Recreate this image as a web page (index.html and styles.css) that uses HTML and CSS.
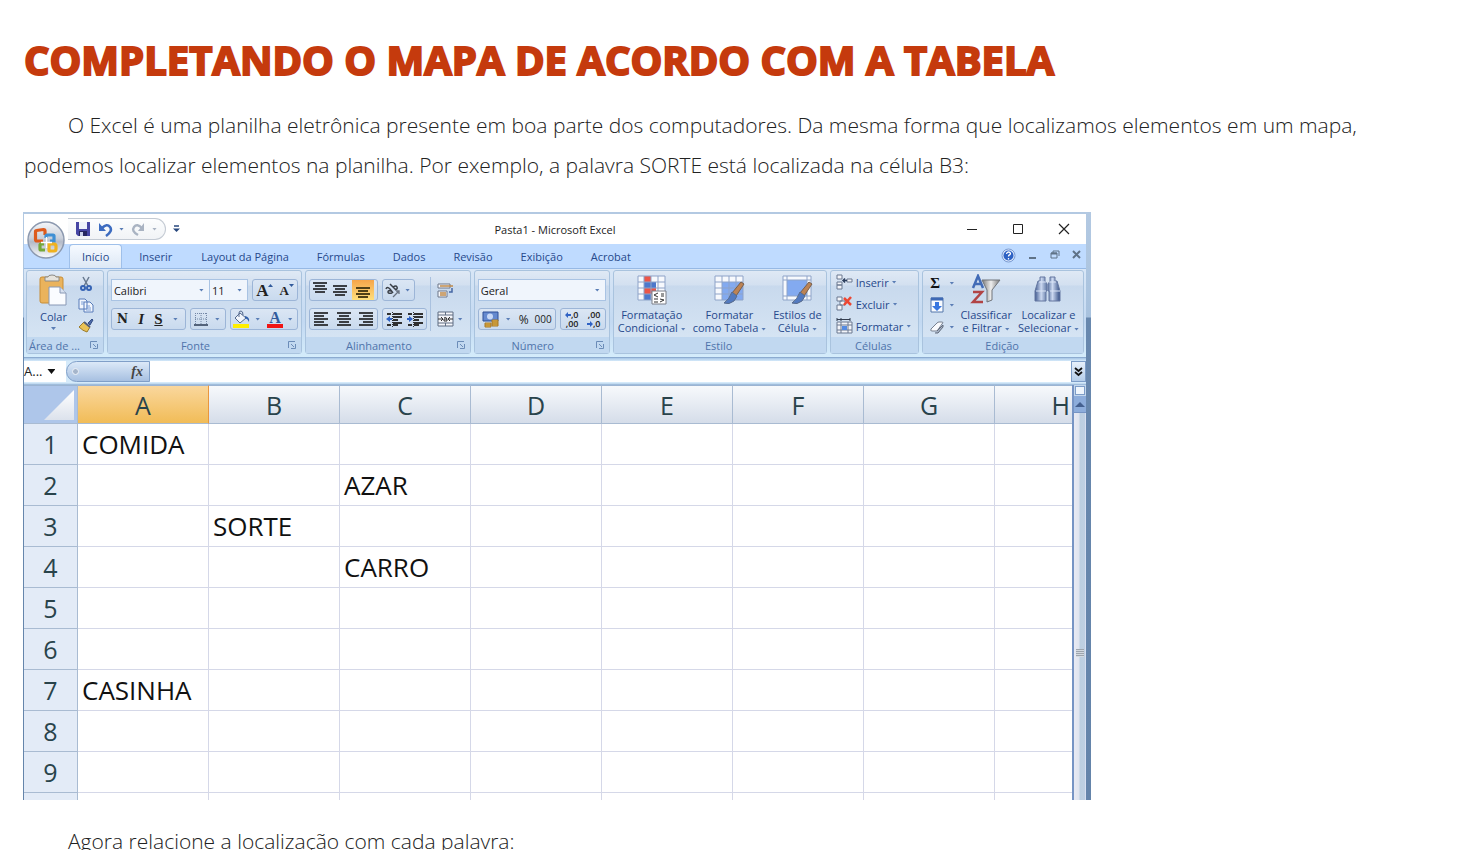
FILE: index.html
```html
<!DOCTYPE html>
<html lang="pt-BR">
<head>
<meta charset="utf-8">
<title>Completando o mapa de acordo com a tabela</title>
<link rel="stylesheet" href="styles.css">
</head>
<body>
<main class="page">
<h1 class="title">COMPLETANDO O MAPA DE ACORDO COM A TABELA</h1>
<p class="text">O Excel é uma planilha eletrônica presente em boa parte dos computadores. Da mesma forma que localizamos elementos em um mapa, podemos localizar elementos na planilha. Por exemplo, a palavra SORTE está localizada na célula B3:</p>

<section class="excel" aria-label="Planilha">
<div class="app">
  <div class="top">
    <button class="orb" aria-label="Botão Office"><svg width="40" height="40" viewBox="0 0 40 40"><defs><linearGradient id="orb" x1="0" y1="0" x2="0" y2="1"><stop offset="0" stop-color="#f4f6f9"/><stop offset=".45" stop-color="#c9cfda"/><stop offset=".55" stop-color="#b3bac8"/><stop offset="1" stop-color="#fbfcfd"/></linearGradient></defs><circle cx="20" cy="20" r="18" fill="url(#orb)" stroke="#8c99af" stroke-width="1.5"/><g fill="none" stroke-width="3.2"><path stroke="#dd5a1c" d="M17 21h-6q-1.500 0-1.500-1.500v-8q0-1 1-1l7-1q1.500 0 1.500 1.500v4"/><path stroke="#3f8fd4" d="M20 18v-2q0-1 1-1h6q1 0 1 1v5h-4"/><path stroke="#75a83a" d="M18 24h-3q-1 0-1 1v4q0 1 1 1h4"/><path stroke="#f0b21e" d="M23 24h5q2 0 2 2v3q0 2-2 2h-4q-1 0-1-1z"/></g><path d="M20.500 17v11M15 22.500h11" stroke="#fff" stroke-width="1.400"/></svg></button>
    <header class="titlebar">
      <div class="quick">
        <button class="bare" aria-label="Salvar"><svg width="16" height="16" viewBox="0 0 16 16"><path fill="#4646a4" d="M1 1h14v14H3l-2-2z"/><path fill="#eef2fb" d="M4 1h8v7H4z"/><path fill="#262660" d="M4 10h8v5H4z"/><path fill="#c9cfe8" d="M5 11h3v4H5z"/></svg></button>
        <button class="bare" aria-label="Desfazer"><svg width="15" height="15" viewBox="0 0 15 15"><path d="M4 6q5-5 8-1t-4 9" fill="none" stroke="#3d6cc0" stroke-width="2.6"/><path fill="#3d6cc0" d="M1 1v8h7z"/></svg><i class="caret"></i></button>
        <button class="bare" aria-label="Refazer"><svg width="15" height="15" viewBox="0 0 15 15"><path d="M11 6q-5-5-8-1t4 8" fill="none" stroke="#a9b3c2" stroke-width="2.4"/><path fill="#a9b3c2" d="M13 1v8H7z"/></svg><i class="caret dim"></i></button>
      </div>
      <button class="bare more" aria-label="Personalizar"><svg width="7" height="8" viewBox="0 0 7 8"><path d="M1 1h5" stroke="#27477d" stroke-width="1.500"/><path d="M0 3.500h7L3.500 7z" fill="#27477d"/></svg></button>
      <span class="doc">Pasta1 - Microsoft Excel</span>
      <div class="winbtns">
        <button class="bare" aria-label="Minimizar"><svg width="12" height="12"><path d="M1 6.500h10" stroke="#222"/></svg></button>
        <button class="bare" aria-label="Maximizar"><svg width="12" height="12"><path d="M1.500 1.500h9v9h-9z" stroke="#222" fill="none"/></svg></button>
        <button class="bare" aria-label="Fechar"><svg width="12" height="12"><path d="M1 1l10 10M11 1L1 11" stroke="#222" stroke-width="1.200"/></svg></button>
      </div>
    </header>
    <nav class="tabs">
      <button class="tab active">Início</button><button class="tab">Inserir</button><button class="tab">Layout da Página</button><button class="tab">Fórmulas</button><button class="tab">Dados</button><button class="tab">Revisão</button><button class="tab">Exibição</button><button class="tab">Acrobat</button>
      <div class="docbtns">
        <button class="bare" aria-label="Ajuda"><svg width="15" height="15" viewBox="0 0 15 15"><circle cx="7.500" cy="7.500" r="6.500" fill="#dce8fb" stroke="#7b9bd1"/><circle cx="7.500" cy="7.500" r="5" fill="#2d62c4"/><path d="M5.500 6q.3-2 2-2t2 1.500q0 1-1.300 1.600-.7.400-.7 1.400M7.500 10v1.500" stroke="#fff" stroke-width="1.300" fill="none"/></svg></button>
        <button class="bare" aria-label="Minimizar pasta"><svg width="10" height="10"><path d="M1 8h7" stroke="#5f7287" stroke-width="2"/></svg></button>
        <button class="bare" aria-label="Restaurar pasta"><svg width="10" height="10"><path d="M3 1h6v5M3 1v2M1 3h6v5H1z" stroke="#5f7287" fill="none"/><path d="M1 3.500h6" stroke="#5f7287" stroke-width="2"/></svg></button>
        <button class="bare" aria-label="Fechar pasta"><svg width="10" height="10"><path d="M1 1l7 7M8 1L1 8" stroke="#5f7287" stroke-width="2"/></svg></button>
      </div>
    </nav>
  </div>

  <div class="ribbon">
    <section class="group g-clip">
      <div class="body clip">
        <button class="big"><svg width="28" height="32" viewBox="0 0 28 32"><rect x="1" y="3" width="23" height="26" rx="2" fill="#eab35c" stroke="#c78d36"/><path d="M6 3h3q0-2 4-2t4 2h3v4H6z" fill="#e6e3dc" stroke="#8b8a86"/><path d="M10 13h11l6 6v12H10z" fill="#fafcff" stroke="#8898b5"/><path d="M21 13v6h6" fill="#d8e1f0" stroke="#8898b5"/></svg><span>Colar</span><i class="caret"></i></button>
        <div class="col">
          <button class="bare" aria-label="Recortar"><svg width="16" height="16" viewBox="0 0 16 16"><path d="M5 1l5 9M11 1L6 10" stroke="#68798f" stroke-width="1.500"/><circle cx="5" cy="12" r="2" fill="none" stroke="#3563b4" stroke-width="2"/><circle cx="11" cy="12" r="2" fill="none" stroke="#3563b4" stroke-width="2"/></svg></button>
          <button class="bare" aria-label="Copiar"><svg width="16" height="16" viewBox="0 0 16 16"><path d="M1 2h6l2 2v8H1zM6 5h6l3 3v7H6z" fill="#f2f6fd" stroke="#577bb9"/><path d="M3 5h3M3 7h3M8 9h4M8 11h5M8 13h5" stroke="#7c9fd6"/></svg></button>
          <button class="bare" aria-label="Pincel"><svg width="16" height="16" viewBox="0 0 16 16"><path d="M10 5l4-4 1 1-3 5z" fill="#4c6aa8" stroke="#344f87"/><path d="M6 4l6 5-3 5q-4-1-8-5z" fill="#e9c255" stroke="#9c7b2a"/><path d="M6 4l6 5" stroke="#54607a" stroke-width="2"/></svg></button>
        </div>
      </div>
      <footer class="label"><span>Área de ...</span><svg class="launch" width="8" height="8"><path d="M.5 7V.5H7M3 3l3 3M7.500 3v4.500H3" stroke="#6b8cb8" fill="none"/></svg></footer>
    </section>

    <section class="group g-font">
      <div class="body rows">
        <div class="row">
          <div class="combo"><label class="field wide"><select aria-label="Fonte"><option>Calibri</option></select><i class="caret"></i></label><label class="field grow"><select aria-label="Tamanho"><option>11</option></select><i class="caret"></i></label></div>
          <div class="set w46"><button class="serif big-a" aria-label="Aumentar fonte">A<svg width="5" height="10"><path d="M0 3L2.500 0 5 3z" fill="#315a9c"/></svg></button><button class="serif small-a" aria-label="Diminuir fonte">A<svg width="5" height="12"><path d="M0 0h5L2.500 3z" fill="#315a9c"/></svg></button></div>
        </div>
        <div class="row">
          <div class="set grow"><button class="heavy">N</button><button class="serif"><em>I</em></button><button class="serif"><u>S</u></button><i class="caret"></i></div>
          <div class="set w36"><button aria-label="Bordas"><svg width="14" height="14"><path d="M1.500 1v11M7 1v11M12.500 1v11M1 1.500h12M1 7h12" stroke="#7387a5" stroke-dasharray="1 1"/><path d="M0 13h14" stroke="#2b3b55" stroke-width="1.500"/></svg></button><i class="caret"></i></div>
          <div class="set w68"><button aria-label="Cor de preenchimento"><svg width="17" height="18" viewBox="0 0 17 18"><path d="M7 3l6 5-6 5-5-5z" fill="#f1f5fb" stroke="#54698d"/><path d="M6 7V3q0-2 2-2t2 4" fill="none" stroke="#54698d"/><path d="M12 6q5 1 4 6-1-3-4-4z" fill="#315fa9"/><path d="M0 14h16v4H0z" fill="#ffee00"/></svg></button><i class="caret"></i><button class="serif fontcolor" aria-label="Cor da fonte">A</button><i class="caret"></i></div>
        </div>
      </div>
      <footer class="label"><span>Fonte</span><svg class="launch" width="8" height="8"><path d="M.5 7V.5H7M3 3l3 3M7.500 3v4.500H3" stroke="#6b8cb8" fill="none"/></svg></footer>
    </section>

    <section class="group g-align">
      <div class="body split">
        <div class="rows grow">
          <div class="row">
            <div class="set w69"><button aria-label="Alinhar em cima"><svg width="14" height="16"><path d="M0 1h14M2 4h10M0 7h14M2 10h10" stroke="#3c3f44" stroke-width="2"/></svg></button><button aria-label="Alinhar no meio"><svg width="14" height="16"><path d="M0 4h14M2 7h10M0 10h14M2 13h10" stroke="#3c3f44" stroke-width="2"/></svg></button><button class="on" aria-label="Alinhar embaixo"><svg width="14" height="16"><path d="M0 6h14M2 9h10M0 12h14M2 15h10" stroke="#514018" stroke-width="2"/></svg></button></div>
            <div class="set w33"><button aria-label="Orientação"><svg width="16" height="16" viewBox="0 0 16 16"><path d="M1 7q1-3 4 0l3 4M6 9q-3-1-3 1t4 1M5 2l6 6M8 5q3-2 4 0t-2 3" stroke="#3b4048" stroke-width="1.500" fill="none"/><path d="M8 15l6-6M14 12V9h-3" stroke="#68717f" stroke-width="1.300" fill="none"/></svg></button><i class="caret"></i></div>
          </div>
          <div class="row">
            <div class="set w69"><button aria-label="Esquerda"><svg width="14" height="14"><path d="M0 1h14M0 4h10M0 7h14M0 10h10M0 13h14" stroke="#3c3f44" stroke-width="2"/></svg></button><button aria-label="Centro"><svg width="14" height="14"><path d="M0 1h14M2 4h10M0 7h14M2 10h10M0 13h14" stroke="#3c3f44" stroke-width="2"/></svg></button><button aria-label="Direita"><svg width="14" height="14"><path d="M0 1h14M4 4h10M0 7h14M4 10h10M0 13h14" stroke="#3c3f44" stroke-width="2"/></svg></button></div>
            <div class="set w45"><button aria-label="Diminuir recuo"><svg width="16" height="15"><path d="M1 2h4M7 2h9M7 5h9M7 8h5M7 11h9M1 13h4M7 13h5" stroke="#303030" stroke-width="2"/><path d="M6.500 0v15" stroke="#303030" stroke-dasharray="1 1"/><path d="M0 7l4-3v2h2v2H4v2z" fill="#2f62c4"/></svg></button><button aria-label="Aumentar recuo"><svg width="16" height="15"><path d="M1 2h4M7 2h9M7 5h9M7 8h5M7 11h9M1 13h4M7 13h5" stroke="#303030" stroke-width="2"/><path d="M6.500 0v15" stroke="#303030" stroke-dasharray="1 1"/><path d="M6 7L2 4v2H0v2h2v2z" fill="#2f62c4"/></svg></button></div>
          </div>
        </div>
        <div class="rows side">
          <button class="bare tall" aria-label="Quebrar texto"><svg width="17" height="16" viewBox="0 0 17 16"><path d="M1 2h12v4H1zM1 9h9v6H1z" fill="#f5f6fa" stroke="#6c7789"/><path d="M3 4h13M3 11h6M3 13h6" stroke="#c08b4a" stroke-width="1.500"/><path d="M15 6v4h-3" stroke="#4667a4" stroke-width="1.500" fill="none"/></svg></button>
          <button class="bare tall" aria-label="Mesclar"><svg width="17" height="16" viewBox="0 0 17 16"><path d="M1 1h15v14H1z" fill="#f5f6fa" stroke="#5f6d82"/><path d="M8.500 1v3M8.500 12v3M1 4h15M1 12h15" stroke="#5f6d82"/><path d="M1 8h5M16 8h-5M4 6l2 2-2 2M13 6l-2 2 2 2M7 7q3-2 3 3H7V8h3" stroke="#333" fill="none"/></svg><i class="caret"></i></button>
        </div>
      </div>
      <footer class="label"><span>Alinhamento</span><svg class="launch" width="8" height="8"><path d="M.5 7V.5H7M3 3l3 3M7.500 3v4.500H3" stroke="#6b8cb8" fill="none"/></svg></footer>
    </section>

    <section class="group g-num">
      <div class="body rows">
        <div class="row"><label class="field grow"><select aria-label="Formato de número"><option>Geral</option></select><i class="caret"></i></label></div>
        <div class="row">
          <div class="set grow"><button aria-label="Moeda"><svg width="18" height="17" viewBox="0 0 18 17"><path d="M1 1h15v9H1z" fill="#6489cf" stroke="#2c4f97"/><circle cx="8" cy="5.500" r="3" fill="#c7d8f6"/><path d="M10 9h6v6h-6zM3 12h6v4H3z" fill="#e8b84c" stroke="#a57724"/><path d="M10 11h6M10 13h6M3 14h6" stroke="#a57724"/></svg></button><i class="caret"></i><button class="pct">%</button><button class="zeros">000</button></div>
          <div class="set w46"><button class="dec" aria-label="Aumentar casas decimais"><span class="d"><svg width="6" height="6"><path d="M0 3l3-3v2h3v2H3v2z" fill="#2f62c4"/></svg>,0</span><span class="d">,00</span></button><button class="dec" aria-label="Diminuir casas decimais"><span class="d">,00</span><span class="d"><svg width="6" height="6"><path d="M6 3L3 0v2H0v2h3v2z" fill="#2f62c4"/></svg>,0</span></button></div>
        </div>
      </div>
      <footer class="label"><span>Número</span><svg class="launch" width="8" height="8"><path d="M.5 7V.5H7M3 3l3 3M7.500 3v4.500H3" stroke="#6b8cb8" fill="none"/></svg></footer>
    </section>

    <section class="group g-style">
      <div class="body bigs">
        <button class="big"><svg width="32" height="32" viewBox="0 0 32 32"><path d="M2 2h27v24H2z" fill="#f7f9fd"/><path d="M8 2h7v6H8zM8 14h12v6H8z" fill="#ec5548"/><path d="M8 8h12v6H8zM8 20h7v6H8z" fill="#4d78cc"/><path d="M2 2h27v24H2zM8 2v24M15 2v24M22 2v24M2 8h27M2 14h27M2 20h27" stroke="#8ea3c8" fill="none"/><path d="M16 17h14v13H16z" fill="#fff" stroke="#7b7f88"/><path d="M22 19l-4 2 4 2M18 25h4M18 28h4M25 20h3M25 22h3M24 25l4 1-4 2" stroke="#333" fill="none"/></svg><span>Formatação<br>Condicional <i class="caret"></i></span></button>
        <button class="big"><svg width="32" height="32" viewBox="0 0 32 32"><path d="M2 2h28v24H2z" fill="#f7f9fd"/><path d="M9 8h21v18H9z" fill="#83aaf0"/><path d="M2 2h28v24H2zM9 2v24M16 2v24M23 2v24M2 8h28M2 14h28M2 20h28" stroke="#8ea3c8" fill="none"/><path d="M28 8l3 2-8 12-4-3z" fill="#bd8354" stroke="#78604d"/><path d="M19 18l5 4-3 5q-5 4-10 2 5-3 8-11z" fill="#527ac1" stroke="#586b8b"/></svg><span>Formatar<br>como Tabela <i class="caret"></i></span></button>
        <button class="big"><svg width="32" height="32" viewBox="0 0 32 32"><path d="M2 2h28v24H2z" fill="#f7f9fd"/><path d="M6 6h20v16H6z" fill="#83aaf0"/><path d="M2 2h28v24H2zM6 2v24M26 2v24M2 6h28M2 22h28" stroke="#8ea3c8" fill="none"/><path d="M28 8l3 2-8 12-4-3z" fill="#bd8354" stroke="#78604d"/><path d="M19 18l5 4-3 5q-5 4-10 2 5-3 8-11z" fill="#527ac1" stroke="#586b8b"/></svg><span>Estilos de<br>Célula <i class="caret"></i></span></button>
      </div>
      <footer class="label"><span>Estilo</span></footer>
    </section>

    <section class="group g-cells">
      <div class="body list">
        <button class="item"><svg width="17" height="16" viewBox="0 0 17 16"><path d="M1 1h5v4H1zM1 8h5v3H1zM1 11h5v4H1zM11 5h5v3h-5z" fill="#f3f5fa" stroke="#6b7890"/><path d="M11 6.500H7M9 4.500L7 6.500l2 2" stroke="#2c3e5d" stroke-width="1.500" fill="none"/></svg>Inserir <i class="caret"></i></button>
        <button class="item"><svg width="17" height="16" viewBox="0 0 17 16"><path d="M1 1h5v4H1zM4 5h5v4H4zM1 9h5v5H1z" fill="#f3f5fa" stroke="#6b7890"/><path d="M8 2l7 7M15 1L8 9" stroke="#ec4733" stroke-width="2.500"/></svg>Excluir <i class="caret"></i></button>
        <button class="item"><svg width="17" height="16" viewBox="0 0 17 16"><path d="M1 4h15v11H1zM5 4v11M12 4v11M1 7h15M1 12h15" fill="#f3f5fa" stroke="#6b7890"/><path d="M6 8h5v4H6z" fill="#548be2"/><path d="M1 1.500h13M1 0v3M5 0v3M14 0v3" stroke="#333e50"/></svg>Formatar <i class="caret"></i></button>
      </div>
      <footer class="label"><span>Células</span></footer>
    </section>

    <section class="group g-edit">
      <div class="body edit">
        <div class="list">
          <button class="item serif sigma" aria-label="Soma">Σ <i class="caret"></i></button>
          <button class="item" aria-label="Preencher"><svg width="14" height="16" viewBox="0 0 14 16"><path d="M1 1h12v14H1z" fill="#f8fbff" stroke="#5576aa"/><path d="M1 2h12" stroke="#3e69b5" stroke-width="3"/><path d="M5 5h4v4h3l-5 5-5-5h3z" fill="#3977e0"/></svg><i class="caret"></i></button>
          <button class="item" aria-label="Limpar"><svg width="14" height="14" viewBox="0 0 14 14"><path d="M1 9l6-6q1-1 2-1h3q2 0 0 2L7 11H2q-2 0-1-2z" fill="#f9fafd" stroke="#77808f"/><path d="M7 11l6-6v2l-5 6H5" fill="#a8b3c7" stroke="#626b7a"/></svg><i class="caret"></i></button>
        </div>
        <button class="big"><svg width="32" height="32" viewBox="0 0 32 32"><defs><linearGradient id="fun"><stop stop-color="#777"/><stop offset=".5" stop-color="#eee"/><stop offset="1" stop-color="#777"/></linearGradient></defs><path d="M3 14L8 2l5 12M5 10h6" stroke="#426bb6" stroke-width="2.500" fill="none"/><path d="M3 18h9L3 28h10" stroke="#b14445" stroke-width="2.500" fill="none"/><path d="M12 6h18L22 16v10l-5 2V16z" fill="url(#fun)" stroke="#70747a"/></svg><span>Classificar<br>e Filtrar <i class="caret"></i></span></button>
        <button class="big"><svg width="32" height="32" viewBox="0 0 32 32"><defs><linearGradient id="bin"><stop stop-color="#415b91"/><stop offset=".25" stop-color="#cbd8f0"/><stop offset=".5" stop-color="#56709f"/><stop offset=".7" stop-color="#cbd8f0"/><stop offset="1" stop-color="#334e85"/></linearGradient></defs><path d="M8 3h5v4l2 3v7h-1v10H3V17l3-10h2zM18 3h5v4h2l3 10v10H17V17h-1v-7l2-3z" fill="url(#bin)" stroke="#6477a0"/><path d="M7 8h7M17 8h7M4 17h10M18 17h10" stroke="#dae4f6"/></svg><span>Localizar e<br>Selecionar <i class="caret"></i></span></button>
      </div>
      <footer class="label"><span>Edição</span></footer>
    </section>
  </div>

  <div class="formula">
    <button class="namebox">A... <i class="caret black"></i></button>
    <button class="fx" aria-label="Inserir função"><span class="dot"></span><em>fx</em></button>
    <input class="entry" aria-label="Barra de fórmulas">
    <button class="expand" aria-label="Expandir"><svg width="9" height="10"><path d="M1 1l3.500 3L8 1M1 5l3.500 3L8 5" stroke="#111" stroke-width="1.800" fill="none"/></svg></button>
  </div>

  <div class="sheet">
    <div class="viewport">
    <table class="grid">
      <colgroup><col class="c-head"><col class="c"><col class="c"><col class="c"><col class="c"><col class="c"><col class="c"><col class="c"><col></colgroup>
      <thead><tr><th class="corner"><svg width="30" height="30"><defs><linearGradient id="cor" x1="0" y1="0" x2="0" y2="1"><stop stop-color="#fff"/><stop offset="1" stop-color="#dce2ec"/></linearGradient></defs><path d="M30 0v30H0z" fill="url(#cor)"/></svg></th><th class="sel">A</th><th>B</th><th>C</th><th>D</th><th>E</th><th>F</th><th>G</th><th class="last">H</th></tr></thead>
      <tbody>
      <tr><th>1</th><td>COMIDA</td><td></td><td></td><td></td><td></td><td></td><td></td><td></td></tr>
      <tr><th>2</th><td></td><td></td><td>AZAR</td><td></td><td></td><td></td><td></td><td></td></tr>
      <tr><th>3</th><td></td><td>SORTE</td><td></td><td></td><td></td><td></td><td></td><td></td></tr>
      <tr><th>4</th><td></td><td></td><td>CARRO</td><td></td><td></td><td></td><td></td><td></td></tr>
      <tr><th>5</th><td></td><td></td><td></td><td></td><td></td><td></td><td></td><td></td></tr>
      <tr><th>6</th><td></td><td></td><td></td><td></td><td></td><td></td><td></td><td></td></tr>
      <tr><th>7</th><td>CASINHA</td><td></td><td></td><td></td><td></td><td></td><td></td><td></td></tr>
      <tr><th>8</th><td></td><td></td><td></td><td></td><td></td><td></td><td></td><td></td></tr>
      <tr><th>9</th><td></td><td></td><td></td><td></td><td></td><td></td><td></td><td></td></tr>
      <tr class="cut"><th></th><td></td><td></td><td></td><td></td><td></td><td></td><td></td><td></td></tr>
      </tbody>
    </table>
    </div>
    <div class="scroll"><div class="splitter"></div><button class="up" aria-label="Rolar para cima"><svg width="10" height="5"><path d="M5 0l5 5H0z" fill="#44608f"/></svg></button><div class="thumb"><span class="grip"></span></div></div>
  </div>
</div>
</section>

<p class="text after">Agora relacione a localização com cada palavra:</p>
</main>
</body>
</html>
```
FILE: styles.css
```css
* { box-sizing: border-box; }
html { scrollbar-width: none; }
body { margin: 0; background: #fff; color: #222; font-family: "Open Sans", "Noto Sans", sans-serif; }
button, select, input { font: inherit; color: inherit; margin: 0; padding: 0; border: 0; background: none; }
svg { display: block; flex: none; }
.page { padding: 33px 24px 0 23px; }
.title { margin: 0; padding-left: 1px; font-size: 40px; line-height: 54px; font-weight: 700; color: #c53a0d; -webkit-text-stroke: 2px #c53a0d; }
.text { margin: 18px 0 0; padding-left: 1px; font-size: 21px; line-height: 40px; font-weight: 300; text-indent: 44px; }
.after { margin-top: 21px; }

.excel { width: 100%; max-width: 1068px; margin-top: 27px; padding: 2px 5px 0 1px; background: linear-gradient(#b3c9e2, #a8c2de 105px, #6888ae 106px, #6484aa); font-size: 11px; line-height: 13px; color: #26498c; }
.app { background: #bfdbff; }
.top { display: grid; grid-template-columns: 44px 1fr; grid-template-rows: 30px 24px; background: linear-gradient(#fff 30px, #bfdbff 30px); }
.orb { grid-row: 1 / 3; display: flex; align-items: center; justify-content: center; height: 52px; }
.titlebar { display: flex; align-items: center; color: #222; }
.bare { display: flex; align-items: center; justify-content: center; gap: 6px; }
.quick { display: flex; align-items: center; gap: 7px; height: 22px; width: 98px; padding-left: 7px; border: 1px solid #c3cad3; border-left: 0; border-radius: 0 11px 11px 0; background: linear-gradient(#fcfdfe, #f1f3f6); }
.more { margin-left: 7px; }
.doc { flex: 1; text-align: center; padding-left: 30px; }
.winbtns { display: flex; gap: 34px; padding-right: 16px; margin-left: 66px; }
.caret { display: inline-block; flex: none; width: 5px; height: 3px; background: #5a7db5; clip-path: polygon(0 0, 100% 0, 50% 100%); vertical-align: middle; }
.caret.dim { background: #a9b3c2; }
.caret.black { width: 8px; height: 5px; background: #111; }
.tabs { display: flex; align-items: stretch; }
.tab { padding: 0 15px; margin-right: 2px; white-space: nowrap; }
.tab:nth-child(n+3) { padding: 0 12px; margin-right: 4px; }
.tab.active { padding: 0 12px; margin-left: 1px; background: linear-gradient(#f6faff, #dde8f5); border: 1px solid #9fc0ea; border-bottom: 0; border-radius: 4px 4px 0 0; }
.docbtns { display: flex; align-items: center; gap: 12px; margin-left: auto; padding-right: 4px; padding-bottom: 2px; }

.ribbon { display: flex; gap: 3px; height: 90px; padding: 1px 2px 3px; background: linear-gradient(#d8e6f6, #c3d9f2 60%, #d4ecfb); border-top: 1px solid #97b9e5; border-bottom: 1px solid #8cabd0; }
.group { display: flex; flex-direction: column; min-width: 0; border: 1px solid #a9c3de; border-radius: 3px; background: linear-gradient(#dfe9f5, #d3e0f0 14px, #c8d9ed 15px, #d9e7f5); }
.g-clip { flex: 77 1 0; }
.g-font { flex: 196 1 0; }
.g-align { flex: 166 1 0; }
.g-num { flex: 136 1 0; }
.g-style { flex: 215 1 0; }
.g-cells { flex: 89 1 0; }
.g-edit { flex: 162 1 0; }
.label { display: flex; align-items: center; justify-content: center; height: 16px; padding: 0 5px 0 3px; background: #c1d8f0; color: #4f74ab; white-space: nowrap; }
.label span { flex: 1; text-align: center; }
.launch { margin-left: 8px; }
.g-clip .label { padding-left: 0; }
.body { flex: 1; min-height: 0; }
.clip { display: flex; justify-content: space-around; padding: 3px 3px 0 7px; }
.big { display: flex; flex-direction: column; align-items: center; gap: 2px; white-space: nowrap; text-align: center; }
.clip .big { gap: 4px; }
.col { display: flex; flex-direction: column; gap: 5px; padding-top: 2px; }
.rows { display: flex; flex-direction: column; gap: 7px; padding: 8px 3px 0; }
.row { display: flex; gap: 4px; height: 22px; }
.grow { flex: 1; min-width: 0; }
.combo { display: flex; flex: 1; }
.field { display: flex; align-items: center; min-width: 0; padding: 0 5px 0 2px; background: #f0f5fc; border: 1px solid #a9c3e3; color: #222; }
.field select { flex: 1; min-width: 0; appearance: none; }
.wide { flex: 0 0 98px; border-right: 0; }
.set { display: flex; align-items: center; justify-content: space-around; border: 1px solid #9cb5d7; border-radius: 3px; background: linear-gradient(#dbe6f4, #c9daee); color: #222; }
.set button { display: flex; align-items: center; justify-content: center; height: 20px; }
.set .caret { margin-right: 2px; }
.w33 { width: 33px; } .w36 { width: 36px; } .w45 { width: 45px; } .w46 { width: 46px; } .w68 { width: 68px; } .w69 { width: 69px; }
.set .on { height: 20px; padding: 0 4px; background: linear-gradient(#f5a54a, #ffdf7d); }
.serif { font-family: "Liberation Serif", serif; font-size: 15px; font-weight: 700; }
.heavy { font-family: "DejaVu Serif", serif; font-size: 12px; font-weight: 700; }
.big-a { font-size: 17px; }
.small-a { font-size: 13px; }
.serif svg { align-self: flex-start; margin-top: 4px; }
.fontcolor { color: #315a9c; font-size: 16px; }
.set .fontcolor { height: 17px; width: 16px; border-bottom: 4px solid #f01414; }
.split { display: flex; }
.split .rows.grow { padding-right: 2px; }
.side { width: 40px; padding: 8px 4px 0 7px; background: linear-gradient(#a9c1df, #a9c1df) 0 6px / 1px 54px no-repeat; }
.tall { height: 22px; gap: 4px; justify-content: flex-start; }
.pct { font-size: 12px; }
.zeros { font-size: 10px; }
.dec { font-size: 9px; line-height: 9px; font-weight: 600; }
.set .dec { flex-direction: column; align-items: flex-end; gap: 0; height: 18px; }
.d { display: flex; align-items: center; height: 9px; }
.bigs { display: flex; justify-content: space-between; padding: 3px 4px 0; }
.list { display: flex; flex-direction: column; gap: 4px; padding: 2px 0 0 5px; }
.item { display: flex; align-items: center; gap: 3px; height: 18px; white-space: nowrap; }
.edit { display: flex; justify-content: space-between; padding: 3px 4px 0 0; }
.edit .list { padding-top: 0; padding-left: 7px; }
.edit .item { justify-content: space-between; width: 24px; color: #111; }

.formula { display: flex; height: 27px; padding: 3px 0; background: linear-gradient(#a6c5e6, #d5eafa 3px, #d5eafa 25px, #8eaed2); }
.namebox { display: flex; align-items: center; gap: 5px; width: 42px; background: #fff; color: #222; font-size: 13px; }
.fx { display: flex; align-items: center; justify-content: space-between; width: 84px; padding: 0 6px 0 5px; border: 1px solid #809fc8; border-radius: 11px 0 0 11px; background: linear-gradient(#dce9f8, #a7c0e1); font: 700 14px "Liberation Serif", serif; color: #444; }
.dot { width: 7px; height: 7px; border-radius: 50%; background: #a5b5cb; border: 1px solid #eef3fa; }
.entry { flex: 1; min-width: 0; background: #fff; }
.expand { display: flex; align-items: center; justify-content: center; width: 15px; border: 1px solid #7d9dc8; background: linear-gradient(#e7f0fa, #b4cdea); }

.sheet { display: flex; }
.viewport { flex: 1; min-width: 0; overflow: hidden; background: #fff; }
.grid { width: 100%; table-layout: fixed; border-collapse: separate; border-spacing: 0; font-size: 26px; line-height: 36px; color: #111; }
.c-head { width: 54px; }
.c { width: 131px; }
.grid th, .grid td { height: 41px; padding: 0 0 0 4px; border-right: 1px solid #d5d8e8; border-bottom: 1px solid #d5d8e8; white-space: nowrap; overflow: hidden; }
.grid th { padding: 0; font-weight: 400; font-size: 25px; color: #29434b; text-align: center; background: #e3ebf7; border-color: #a9bbd2; }
.grid thead th { height: 39px; background: linear-gradient(#f7f9fc, #d5dde9); border-top: 1px solid #9cb4d2; }
.grid thead .sel { background: linear-gradient(#fad79d, #f1bc57); border-right-color: #e9963e; }
.grid thead .corner { background: #aec6ea; }
.corner svg { margin: 0 3px 0 auto; }
.grid tr > :last-child { border-right: 0; }
.grid thead .last { text-align: right; padding-right: 2px; }
.grid .cut th, .grid .cut td { height: 7px; border-bottom: 0; line-height: 5px; }
.scroll { display: flex; flex-direction: column; width: 14px; border-left: 2px solid #7694c4; background: #c4d7ec; }
.splitter { height: 9px; margin: 1px; border: 1px solid #7d9dc8; background: #eff6fd; }
.up { display: flex; align-items: center; justify-content: center; height: 16px; background: #8daddb; }
.thumb { flex: 1; display: flex; align-items: center; justify-content: center; padding-top: 92px; border-top: 1px solid #7694c4; background: linear-gradient(90deg, #e8eaf3, #dfe4ef 5px, #bccfe1 6px, #bfd0e3 11px, #eef 12px); }
.grip { width: 8px; height: 8px; background: repeating-linear-gradient(#9da5ae 0 1px, #d4dae1 1px 2px); }
```
